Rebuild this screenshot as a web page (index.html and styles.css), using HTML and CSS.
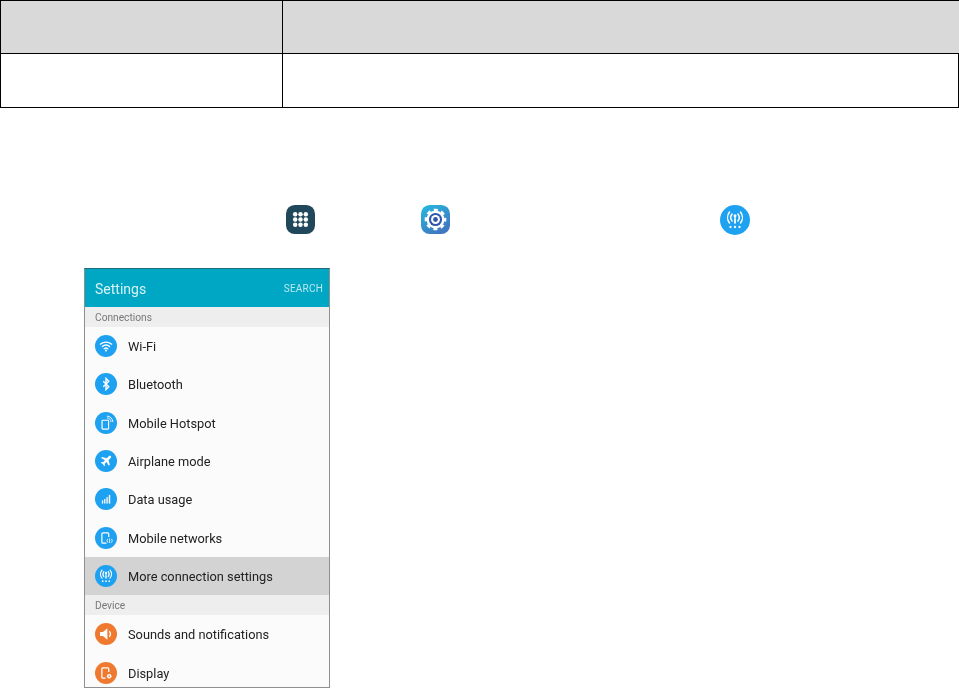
FILE: index.html
```html
<!DOCTYPE html>
<html lang="en">
<head>
<meta charset="utf-8">
<title>Settings</title>
<link rel="stylesheet" href="styles.css">
</head>
<body>
<svg class="defs" width="0" height="0" aria-hidden="true">
  <defs>
    <linearGradient id="gear-bg" x1="0" y1="0" x2="0.6" y2="1">
      <stop offset="0" stop-color="#25bbdf"/>
      <stop offset="1" stop-color="#4077c0"/>
    </linearGradient>
    <symbol id="radio" viewBox="0 0 30 30">
      <g fill="none" stroke="#fff" stroke-width="1.5" stroke-linecap="round">
        <path d="M12.100 9a5.500 5.500 0 0 0 0 7M17.900 9a5.500 5.500 0 0 1 0 7M9.500 7a9 9 0 0 0 0 11M20.500 7a9 9 0 0 1 0 11"/>
      </g>
      <circle cx="15" cy="10.800" r="1.500" fill="#fff"/>
      <path d="M14.300 11.500h1.400l.3 7h-2z" fill="#fff"/>
      <circle cx="10.500" cy="22" r="1.150" fill="#fff"/>
      <circle cx="15" cy="22" r="1.150" fill="#fff"/>
      <circle cx="19.500" cy="22" r="1.150" fill="#fff"/>
    </symbol>
  </defs>
</svg>

<div class="table">
  <div class="cell head first"></div>
  <div class="cell head"></div>
  <div class="cell first"></div>
  <div class="cell"></div>
</div>

<div class="steps">
  <svg class="step-icon apps" viewBox="0 0 30 30" aria-hidden="true">
    <rect width="30" height="30" rx="9" fill="#21475a"/>
    <g fill="#fff">
      <circle cx="9.500" cy="9.500" r="2.300"/><circle cx="15" cy="9.500" r="2.300"/><circle cx="20.500" cy="9.500" r="2.300"/>
      <circle cx="9.500" cy="15" r="2.300"/><circle cx="15" cy="15" r="2.300"/><circle cx="20.500" cy="15" r="2.300"/>
      <circle cx="9.500" cy="20.500" r="2.300"/><circle cx="15" cy="20.500" r="2.300"/><circle cx="20.500" cy="20.500" r="2.300"/>
    </g>
  </svg>
  <svg class="step-icon gear" viewBox="0 0 30 30" aria-hidden="true">
    <rect width="30" height="30" rx="9" fill="url(#gear-bg)"/>
    <circle cx="15" cy="15" r="9.300" fill="#fff"/>
    <circle cx="15" cy="15" r="10" fill="none" stroke="#fff" stroke-width="2.400" stroke-dasharray="4.200 3.654" stroke-dashoffset="2.100"/>
    <circle cx="15" cy="15" r="6.800" fill="#2f57ad"/>
    <circle cx="15" cy="15" r="4.600" fill="#fff"/>
    <circle cx="15" cy="15" r="2.500" fill="#2f57ad"/>
  </svg>
  <svg class="step-icon tower" viewBox="0 0 30 30" aria-hidden="true">
    <circle cx="15" cy="15" r="15" fill="#1ea1f0"/>
    <use href="#radio" width="30" height="30"/>
  </svg>
</div>

<div class="phone">
  <div class="appbar"><span class="appbar-title">Settings</span><span class="appbar-action">SEARCH</span></div>
  <div class="section">Connections</div>
  <div class="row">
    <svg class="ico blue" viewBox="0 0 24 24" aria-hidden="true">
      <g fill="none" stroke="#fff" stroke-width="1.400" stroke-linecap="round">
        <path d="M5.800 10a10 10 0 0 1 12.400 0M8 12.500a6.500 6.500 0 0 1 8 0M10 15a3.200 3.200 0 0 1 4 0"/>
      </g>
      <circle cx="12" cy="17" r="1.100" fill="#fff"/>
    </svg>
    <span>Wi-Fi</span>
  </div>
  <div class="row">
    <svg class="ico blue" viewBox="0 0 24 24" aria-hidden="true">
      <path d="M9 9l6 6-3 3V6l3 3-6 6" fill="none" stroke="#fff" stroke-width="1.500"/>
    </svg>
    <span>Bluetooth</span>
  </div>
  <div class="row">
    <svg class="ico blue" viewBox="0 0 24 24" aria-hidden="true">
      <path d="M8.500 9h5.500a.8.8 0 0 1 .8.8v8a.8.8 0 0 1-.8.8H8.500a.8.8 0 0 1-.8-.8v-8a.8.8 0 0 1 .8-.8z" fill="none" stroke="#fff" stroke-width="1.300"/>
      <path d="M13 6.500a4.500 4.500 0 0 1 4.500 4.500M13 4.500a6.500 6.500 0 0 1 6.500 6.500" fill="none" stroke="#fff" stroke-width="1"/>
    </svg>
    <span>Mobile Hotspot</span>
  </div>
  <div class="row">
    <svg class="ico blue" viewBox="0 0 24 24" aria-hidden="true">
      <path transform="translate(2.400 2.400) scale(.8)" d="M18.600 5.400c-.8-.8-2-.7-2.800.1l-2.700 2.700-6.500-1.500-1.300 1.300 5.300 3-2.600 2.600-2.100-.4-1.100 1.100 3 1.700 1.700 3 1.100-1.100-.4-2.100 2.600-2.600 3 5.300 1.300-1.300-1.500-6.500 2.700-2.700c.8-.8.9-2 .1-2.800z" fill="#fff"/>
    </svg>
    <span>Airplane mode</span>
  </div>
  <div class="row">
    <svg class="ico blue" viewBox="0 0 24 24" aria-hidden="true">
      <g fill="#fff">
        <rect x="7.500" y="13.500" width="1.400" height="3.500"/>
        <rect x="10" y="12" width="1.400" height="5"/>
        <rect x="12.500" y="10" width="1.400" height="7"/>
        <rect x="15" y="7.500" width="1.600" height="9.500"/>
      </g>
    </svg>
    <span>Data usage</span>
  </div>
  <div class="row">
    <svg class="ico blue" viewBox="0 0 24 24" aria-hidden="true">
      <path d="M12.500 17.500H8.500a1 1 0 0 1-1-1V7.500a1 1 0 0 1 1-1h5.500a1 1 0 0 1 1 1v3.500" fill="none" stroke="#fff" stroke-width="1.300"/>
      <path d="M14 13a3 3 0 0 0 0 4M18 13a3 3 0 0 1 0 4" fill="none" stroke="#fff" stroke-width=".9"/>
      <rect x="15.600" y="12.500" width=".9" height="5" fill="#fff"/>
    </svg>
    <span>Mobile networks</span>
  </div>
  <div class="row active">
    <svg class="ico blue" viewBox="0 0 30 30" aria-hidden="true">
      <use href="#radio" width="30" height="30"/>
    </svg>
    <span>More connection settings</span>
  </div>
  <div class="section device">Device</div>
  <div class="row">
    <svg class="ico orange" viewBox="0 0 24 24" aria-hidden="true">
      <path d="M5.500 9.700h3.200l4.800-4v12.600l-4.800-4H5.500z" fill="#fff"/>
      <path d="M15.500 9a4 4 0 0 1 0 6" fill="none" stroke="#fff" stroke-width="1.500"/>
    </svg>
    <span>Sounds and notifications</span>
  </div>
  <div class="row">
    <svg class="ico orange" viewBox="0 0 24 24" aria-hidden="true">
      <path d="M11.500 17.500H8.500a1 1 0 0 1-1-1V7.500a1 1 0 0 1 1-1h5.500a1 1 0 0 1 1 1v3.500" fill="none" stroke="#fff" stroke-width="1.400"/>
      <circle cx="15.500" cy="15.500" r="2.500" fill="#fff"/>
      <circle cx="15.500" cy="15.500" r=".9" fill="#ef7a2f"/>
    </svg>
    <span>Display</span>
  </div>
</div>
</body>
</html>
```

FILE: styles.css
```css
* {
  box-sizing: border-box;
}

html,
body {
  margin: 0;
  height: 688px;
  overflow: hidden;
  background: #fff;
}

.defs {
  display: block;
  height: 0;
}

.table {
  display: grid;
  grid-template-columns: 282px 677px;
  grid-template-rows: 53px 54px 1px;
  width: 959px;
  height: 108px;
  border-top: 1px solid #000;
  border-bottom: 1px solid #000;
  border-right: 1px solid #000;
}

.cell {
  border-left: 1px solid #000;
  border-bottom: 1px solid #000;
}

.cell:nth-child(n+3) {
  border-bottom: 0;
}

.head {
  background: #d9d9d9;
}

.steps {
  display: flex;
  margin: 97px 0 0 286px;
  height: 30px;
}

.step-icon {
  display: block;
  width: 29px;
  height: 29px;
  filter: blur(0.3px);
}

.gear {
  margin-left: 106px;
}

.tower {
  margin-left: 270px;
  width: 30px;
  height: 30px;
}

.phone {
  width: 246px;
  height: 420px;
  margin: 33px 0 0 84px;
  border: 1px solid #8f8f8f;
  border-top-color: #1c6a7a;
  background: #fbfbfb;
  font-family: Roboto, "Liberation Sans", sans-serif;
  color: #222;
  overflow: hidden;
  filter: blur(0.4px);
}

.appbar {
  display: flex;
  align-items: center;
  justify-content: space-between;
  height: 38px;
  padding: 0 6px 0 10px;
  background: #00a7c4;
  color: #d8f2f6;
}

.appbar-title {
  padding-top: 2px;
  font-size: 14px;
}

.appbar-action {
  font-size: 10px;
  color: #b9e8ef;
  letter-spacing: 0.2px;
}

.section {
  display: flex;
  align-items: center;
  height: 20px;
  padding-left: 10px;
  background: #eeeeee;
  color: #777;
  font-size: 10.2px;
}

.row {
  display: flex;
  align-items: center;
  gap: 11px;
  height: 38.3px;
  padding-left: 10px;
  font-size: 12.8px;
}

.row span {
  padding-top: 1px;
}

.row.active {
  background: #d3d3d3;
}

.ico {
  flex: none;
  display: block;
  width: 22px;
  height: 22px;
  border-radius: 50%;
}

.blue {
  background: #1ea1f0;
}

.orange {
  background: #ef7a2f;
}
```
